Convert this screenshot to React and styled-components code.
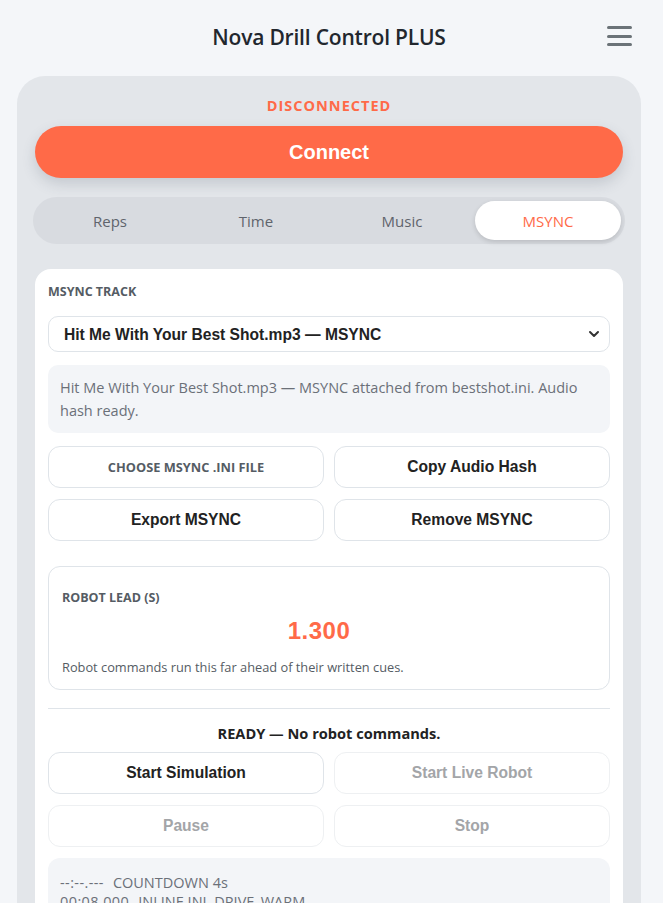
import React, { useState } from "react";
import styled, { createGlobalStyle } from "styled-components";

const ORANGE = "#ff6a48";
const UI_FONT = `"Open Sans", "Noto Sans", sans-serif`;
const BTN_FONT = `"Liberation Sans", Arial, sans-serif`;

const GlobalStyle = createGlobalStyle`
  html, body {
    margin: 0;
    padding: 0;
    background: #f4f6f9;
    overflow: hidden;
  }
  body {
    font-family: ${UI_FONT};
    color: #222;
  }
`;

const Page = styled.div`
  padding: 0 22px 0 17px;
`;

const Header = styled.header`
  height: 76px;
  position: relative;
  display: flex;
  align-items: center;
  justify-content: center;
`;

const Title = styled.h1`
  margin: 0 0 2px;
  font-size: 21px;
  font-weight: 600;
  color: #22272e;
  letter-spacing: -0.2px;
`;

const MenuButton = styled.button`
  position: absolute;
  right: 9px;
  top: 26px;
  width: 25px;
  height: 20px;
  padding: 0;
  border: none;
  background: none;
  display: flex;
  flex-direction: column;
  justify-content: space-between;
  span {
    display: block;
    height: 3px;
    border-radius: 2px;
    background: #6b7378;
  }
`;

const Shell = styled.main`
  background: #e3e6ea;
  border-radius: 28px 28px 0 0;
  padding: 22px 18px 40px;
  min-height: 900px;
`;

const Status = styled.div`
  text-align: center;
  font-size: 14.5px;
  font-weight: 700;
  letter-spacing: 1px;
  color: ${ORANGE};
  line-height: 16px;
`;

const ConnectButton = styled.button`
  display: block;
  width: 100%;
  height: 52px;
  margin-top: 12px;
  border: none;
  border-radius: 26px;
  background: ${ORANGE};
  color: #fff;
  font-family: ${BTN_FONT};
  font-size: 20px;
  font-weight: 700;
  box-shadow: 0 6px 14px rgba(60, 70, 90, 0.18);
`;

const Tabs = styled.div`
  margin: 19px -2px 0;
  padding: 4px;
  display: flex;
  background: #d8dbe0;
  border-radius: 24px;
`;

const Tab = styled.button`
  flex: 1;
  height: 39px;
  border: none;
  border-radius: 20px;
  background: ${(p) => (p.$active ? "#fff" : "transparent")};
  color: ${(p) => (p.$active ? ORANGE : "#5f646c")};
  font-family: ${UI_FONT};
  font-size: 15px;
  font-weight: 500;
  box-shadow: ${(p) => (p.$active ? "0 2px 5px rgba(0,0,0,0.14)" : "none")};
`;

const Card = styled.section`
  margin-top: 25px;
  background: #fff;
  border-radius: 16px;
  padding: 14px 13px 20px;
`;

const Label = styled.div`
  font-size: 12.5px;
  font-weight: 700;
  color: #555c64;
  text-transform: uppercase;
  line-height: 17px;
`;

const SelectWrap = styled.div`
  position: relative;
  margin-top: 16px;
  svg {
    position: absolute;
    right: 10px;
    top: 13px;
    pointer-events: none;
  }
`;

const Select = styled.select`
  appearance: none;
  width: 100%;
  height: 36px;
  padding: 0 30px 0 15px;
  border: 1px solid #dfe4e9;
  border-radius: 10px;
  background: #fff;
  font-family: ${BTN_FONT};
  font-size: 15.6px;
  font-weight: 700;
  color: #222;
`;

const Note = styled.div`
  margin-top: 13px;
  padding: 11px 12px;
  background: #f3f5f8;
  border-radius: 10px;
  font-size: 14.5px;
  line-height: 23px;
  color: #6b7078;
`;

const ButtonGrid = styled.div`
  margin-top: 13px;
  display: grid;
  grid-template-columns: 1fr 1fr;
  column-gap: 10px;
  row-gap: 11px;
`;

const ActionButton = styled.button`
  height: 42px;
  border: 1px solid ${(p) => (p.disabled ? "#eef0f2" : "#dfe4e9")};
  border-radius: 12px;
  background: #fff;
  font-family: ${BTN_FONT};
  font-size: 15.6px;
  font-weight: 700;
  color: ${(p) => (p.disabled ? "#a3a5a8" : "#222")};
`;

const FileButton = styled.label`
  height: 42px;
  box-sizing: border-box;
  border: 1px solid #dfe4e9;
  border-radius: 12px;
  display: flex;
  align-items: center;
  justify-content: center;
  font-size: 12.8px;
  font-weight: 700;
  color: #555c64;
  text-transform: uppercase;
`;

const LeadBox = styled.div`
  margin-top: 25px;
  border: 1px solid #dfe4e9;
  border-radius: 12px;
  padding: 22px 13px 13px;
`;

const LeadValue = styled.div`
  margin-top: 12px;
  padding-right: 20px;
  text-align: center;
  font-family: ${BTN_FONT};
  font-size: 24px;
  font-weight: 700;
  letter-spacing: 0.5px;
  color: ${ORANGE};
  line-height: 26px;
`;

const Hint = styled.div`
  margin-top: 14px;
  font-size: 12.8px;
  color: #555c64;
  line-height: 18px;
`;

const Divider = styled.hr`
  margin: 18px 0 0;
  border: none;
  border-top: 1px solid #dfe4e9;
`;

const RunState = styled.div`
  margin-top: 15px;
  text-align: center;
  font-size: 14.6px;
  font-weight: 700;
  color: #222;
  line-height: 18px;
`;

const RunGrid = styled(ButtonGrid)`
  margin-top: 10px;
`;

const Log = styled.div`
  margin-top: 11px;
  background: #f3f5f8;
  border-radius: 12px;
  padding: 15px 12px;
  font-size: 14.5px;
  line-height: 19px;
  color: #6b7078;
`;

const LogRow = styled.div`
  display: flex;
  gap: 9px;
  white-space: pre;
`;

const LogTime = styled.span`
  letter-spacing: 0.4px;
`;

const tabs = ["Reps", "Time", "Music", "MSYNC"];

const logLines = [
  ["--:--.---", "COUNTDOWN 4s"],
  ["00:08.000", "INLINE INI  DRIVE_WARM"],
  ["00:12.500", "INLINE INI  SPIN_LEFT"],
  ["00:16.000", "INLINE INI  DRIVE_HOLD"],
];

export default function App() {
  const [active, setActive] = useState("MSYNC");
  return (
    <Page>
      <GlobalStyle />
      <Header>
        <Title>Nova Drill Control PLUS</Title>
        <MenuButton aria-label="Menu">
          <span />
          <span />
          <span />
        </MenuButton>
      </Header>
      <Shell>
        <Status>DISCONNECTED</Status>
        <ConnectButton>Connect</ConnectButton>
        <Tabs>
          {tabs.map((t) => (
            <Tab key={t} $active={t === active} onClick={() => setActive(t)}>
              {t}
            </Tab>
          ))}
        </Tabs>
        <Card>
          <Label>MSYNC Track</Label>
          <SelectWrap>
            <Select defaultValue="best">
              <option value="best">Hit Me With Your Best Shot.mp3 — MSYNC</option>
            </Select>
            <svg width="12" height="10" viewBox="0 0 12 10">
              <path
                d="M2 3 L6 7 L10 3"
                fill="none"
                stroke="#333"
                strokeWidth="2"
                strokeLinecap="round"
                strokeLinejoin="round"
              />
            </svg>
          </SelectWrap>
          <Note>
            Hit Me With Your Best Shot.mp3 — MSYNC attached from bestshot.ini.
            Audio hash ready.
          </Note>
          <ButtonGrid>
            <FileButton>Choose MSYNC .ini file</FileButton>
            <ActionButton>Copy Audio Hash</ActionButton>
            <ActionButton>Export MSYNC</ActionButton>
            <ActionButton>Remove MSYNC</ActionButton>
          </ButtonGrid>
          <LeadBox>
            <Label>Robot lead (s)</Label>
            <LeadValue>1.300</LeadValue>
            <Hint>Robot commands run this far ahead of their written cues.</Hint>
          </LeadBox>
          <Divider />
          <RunState>READY — No robot commands.</RunState>
          <RunGrid>
            <ActionButton>Start Simulation</ActionButton>
            <ActionButton disabled>Start Live Robot</ActionButton>
            <ActionButton disabled>Pause</ActionButton>
            <ActionButton disabled>Stop</ActionButton>
          </RunGrid>
          <Log>
            {logLines.map(([time, text]) => (
              <LogRow key={time + text}>
                <LogTime>{time}</LogTime>
                <span>{text}</span>
              </LogRow>
            ))}
          </Log>
        </Card>
      </Shell>
    </Page>
  );
}
